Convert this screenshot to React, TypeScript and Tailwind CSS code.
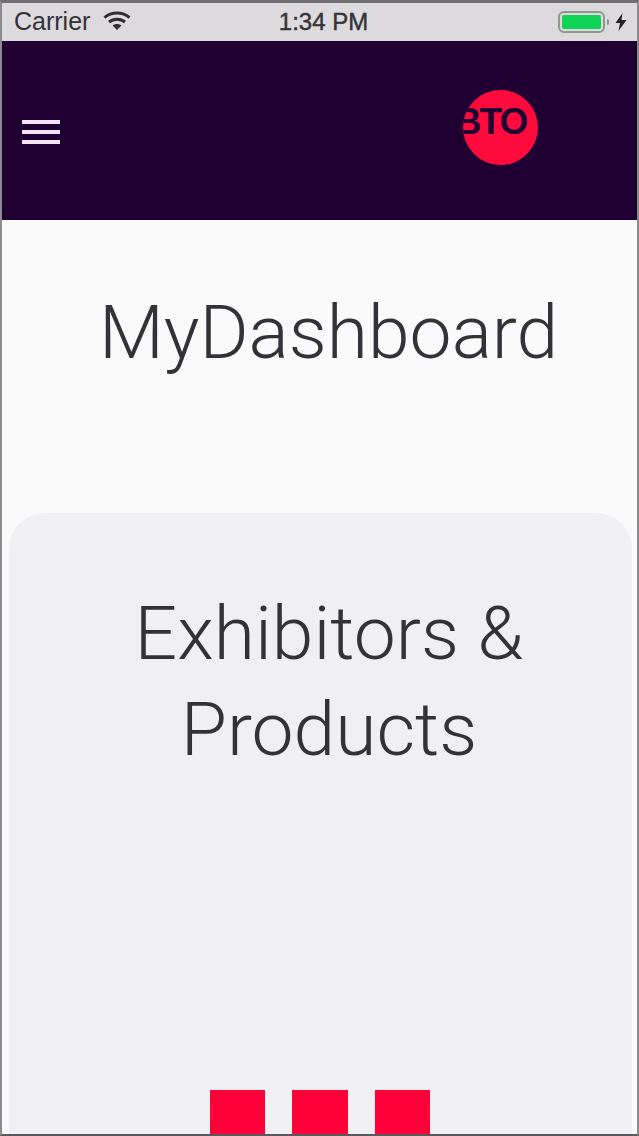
import React from "react";

function Wifi() {
  return (
    <svg width="28" height="20" viewBox="0 0 28 20" fill="none" className="ml-[13px] -mt-[2px]">
      <path d="M1.5 6.6C8.6 0.6 19.4 0.6 26.5 6.6" stroke="#2f2e33" strokeWidth="3" />
      <path d="M6 11C10.6 7.2 17.4 7.2 22 11" stroke="#2f2e33" strokeWidth="3" />
      <path d="M9.6 14.4L14 19L18.4 14.4C15.8 12.4 12.2 12.4 9.6 14.4Z" fill="#2f2e33" />
    </svg>
  );
}

function Battery() {
  return (
    <div className="flex items-center">
      <div className="flex h-[22px] w-[47px] rounded-[6px] border-2 border-[#8c9a8e] p-[2px]">
        <div className="flex-1 rounded-[2px] bg-[#0fd357]" />
      </div>
      <div className="ml-[2px] h-[6px] w-[2px] rounded-r-sm bg-[#8f8d92]" />
      <svg width="12" height="18" viewBox="0 0 12 18" className="ml-[6px]">
        <path d="M7.5 0L0.5 10H5L3.5 18L11.5 7H6.5L7.5 0Z" fill="#222126" />
      </svg>
    </div>
  );
}

export default function App() {
  return (
    <div className="flex h-[1136px] w-[639px] flex-col overflow-hidden border-x-2 border-t-[3px] border-b-2 border-x-[#8b8a8d] border-t-[#6f6e71] border-b-[#5a595c] bg-[#fbfafb] font-['Roboto',sans-serif]">
      <div className="flex h-[38px] shrink-0 items-center justify-between bg-[#dcdadd] pl-[12px] pr-[10px] font-['Liberation_Sans',sans-serif] text-[25px] text-[#333237]">
        <div className="flex w-[200px] items-center">
          <span>Carrier</span>
          <Wifi />
        </div>
        <span className="pl-[6px] text-[24px] font-medium [-webkit-text-stroke:0.4px_#333237]">1:34 PM</span>
        <div className="flex w-[200px] justify-end">
          <Battery />
        </div>
      </div>

      <header className="flex h-[179px] shrink-0 justify-between bg-[#200033] pl-[20px] pr-[99px]">
        <div className="mt-[79px] flex h-[24px] w-[38px] flex-col gap-[6px]">
          <div className="h-[4px] bg-[#f3e4f5]" />
          <div className="h-[4px] bg-[#f3e4f5]" />
          <div className="h-[4px] bg-[#f3e4f5]" />
        </div>
        <div className="mt-[49px] flex h-[75px] w-[75px] items-center justify-center overflow-hidden rounded-full bg-[#ff0a3c]">
          <span className="pb-[11px] pr-[20px] font-['Liberation_Sans',sans-serif] text-[37px] font-bold tracking-[-2px] text-[#200033]">
            BTO
          </span>
        </div>
      </header>

      <h1 className="flex h-[293px] shrink-0 items-start justify-center pl-[18px] pt-[67px] text-[75px] font-light leading-[90px] text-[#333237]">
        MyDashboard
      </h1>

      <section className="ml-[7px] mr-[5px] flex flex-1 flex-col items-center rounded-t-[36px] bg-[#f0eff1]">
        <h2 className="ml-[17px] mt-[72px] w-[480px] text-center text-[75px] font-light leading-[96px] text-[#333237]">
          Exhibitors &amp; Products
        </h2>
        <div className="-ml-[2px] mt-auto flex gap-[27px]">
          <div className="h-[44px] w-[55px] bg-[#ff0038]" />
          <div className="h-[44px] w-[56px] bg-[#ff0038]" />
          <div className="h-[44px] w-[55px] bg-[#ff0038]" />
        </div>
      </section>
    </div>
  );
}
